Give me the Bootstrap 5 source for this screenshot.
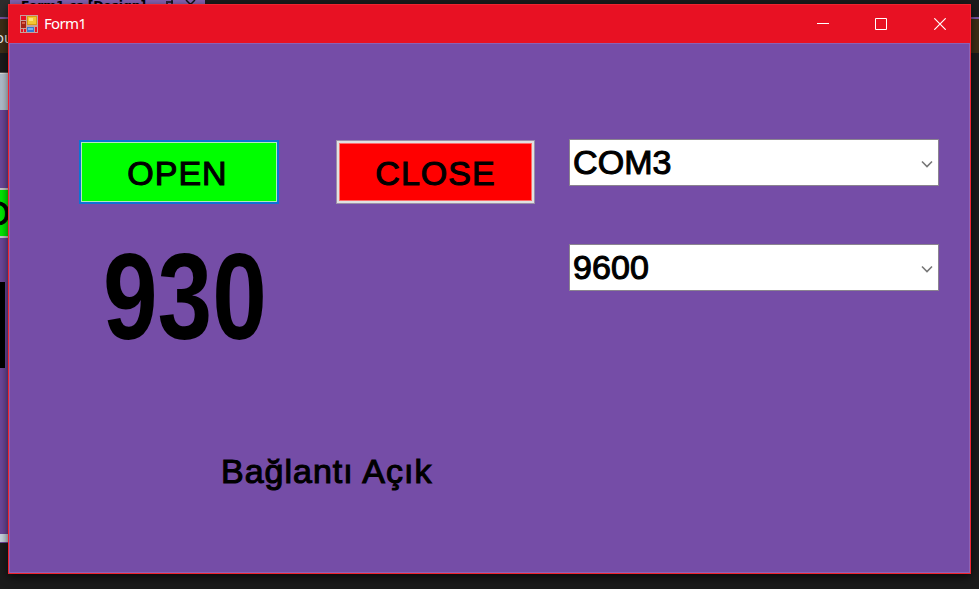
<!DOCTYPE html>
<html lang="tr">
<head>
<meta charset="utf-8">
<meta name="viewport" content="width=device-width, initial-scale=1">
<title>Form1</title>
<link href="https://cdn.jsdelivr.net/npm/bootstrap@5.3.0/dist/css/bootstrap.min.css" rel="stylesheet">
<style>
body{background:#1b1b1b;font-family:"Liberation Sans",Arial,sans-serif;color:#000}
.desktop{width:979px;height:589px}
/* editor behind the form */
.ide-tabs{height:17px;background:linear-gradient(90deg,#2d2d2d 12px,#1b1b1b 12px)}
.ide-tab{margin-left:10px;width:195px;height:17px;background:#8463b0;font:bold 12.5px/11px "DejaVu Sans",sans-serif;padding-left:11px;white-space:nowrap}
.ide-tab .tab-name{width:140px;letter-spacing:-.2px}
.ide-tab svg{margin-top:-1px}
.ide-bar{height:36px;background:#3e2e16;border-top:2px solid #7656a3;color:#eee;font:15px/36px "Open Sans",sans-serif}
.ide-bar span{margin-left:-5px}
.ide-gap{height:20px;width:10px;border-bottom:1px solid #555}
.design{width:10px;height:470px;background:#6c4799}
.design-title{height:37px;background:linear-gradient(90deg,#aebccb,#cbd6df);border-top:1px solid #ddd}
.design-btn{height:50px;margin-top:78px;border-top:2px solid #c8c8c8;border-bottom:2px solid #c8c8c8;background:#00ea00;font-size:34px;line-height:47px;-webkit-text-stroke:1px}
.design-btn span{margin-left:-16px}
.design-num{width:5px;height:86px;margin-top:44px;background:#000}
.design-foot{height:8px;margin-top:166px;background:#c8d4df}
/* form window */
.win{left:8px;top:4px;width:963px;height:570px;border:1px solid #f0252f;background:#754da7;box-shadow:0 3px 9px #000a}
.titlebar{height:38px;background:#e81123;color:#fff;padding:0 1px 0 11px}
.caption{font:15px/36px "Noto Sans","Open Sans",sans-serif;margin:-2px 0 0 6px;letter-spacing:-.7px}
.ctl{width:58.5px;height:38px}
.client{height:530px;border:1px solid #8a62b5;padding:96px 31px 0 69px}
.left{width:456px}
.right{width:370px;gap:58px;margin:-1px -1px 0 0}
.txt{font-size:34px;line-height:38px;-webkit-text-stroke:1.1px #000;white-space:nowrap}
.fbtn{height:64px;border-radius:0;color:#000;padding:1px 0 0}
.open{width:200px;background:#0f0;border:2px solid #0d74d5;box-shadow:inset 0 0 0 1px #b5e8c0;padding-right:3px}
.close-b{width:199px;background:#f00;border:1px solid #9b90a8;box-shadow:inset 0 0 0 2px #e1e1e1,inset 0 0 0 3px #ff6b6b}
.open,.close-b{letter-spacing:1px}
.combo{height:47px;background:#fff;border:1px solid #8b8490;padding:0 5px 0 3px;letter-spacing:.1px}
.combo span{margin-top:-2px}
.combo svg{margin-top:2px}
.big{font-size:122px;font-weight:700;line-height:120px;margin:33px 0 0 24px;transform:scaleX(.805);transform-origin:0 0}
.status{margin:95px 0 0 142px;letter-spacing:1px}
</style>
<script src="https://cdn.jsdelivr.net/npm/bootstrap@5.3.0/dist/js/bootstrap.bundle.min.js"></script>
</head>
<body class="m-0 overflow-hidden">
<div class="desktop position-relative overflow-hidden">
  <div class="ide-tabs overflow-hidden"><div class="ide-tab d-flex"><span class="tab-name">Form1.cs [Design]</span><svg width="36" height="14"><path fill="none" stroke="#111" stroke-width="1.5" d="M5 3h7M11 1v8M6 4v4h5M25 1l9 9M34 1l-9 9"/></svg></div></div>
  <div class="ide-bar"><span>ou</span></div>
  <div class="ide-gap"></div>
  <div class="design overflow-hidden d-flex flex-column">
    <div class="design-title flex-shrink-0"></div>
    <div class="design-btn flex-shrink-0 text-nowrap"><span>O</span></div>
    <div class="design-num flex-shrink-0"></div>
    <div class="design-foot flex-shrink-0"></div>
  </div>

  <main class="win position-absolute">
    <header class="titlebar d-flex align-items-center">
      <svg width="18" height="18" viewBox="0 0 18 18">
        <path fill="#c9a09c" d="M0 0h18v18H0z"/>
        <path fill="#e81123" d="M1 1h5v4H1zM1 14h2v3H1zM4 14h2v3H4zM15 12h2v5h-2z"/>
        <path fill="#a52216" d="M1 6h5v7H1z"/><path fill="#d9604a" d="M2 7h3v2H2z"/>
        <path fill="#d99b12" d="M7 1h10v9H7z"/><path fill="#f3c532" d="M8 2h8v7H8z"/><path fill="#fbe27a" d="M9 3h4v3H9z"/>
        <path fill="#3478d2" d="M7 12h7v5H7z"/><path fill="#77aeec" d="M8 13h5v2H8z"/>
      </svg>
      <span class="caption me-auto">Form1</span>
      <span class="ctl d-flex align-items-center justify-content-center"><svg width="12" height="12"><path stroke="#fff" d="M0 5.5h12"/></svg></span>
      <span class="ctl d-flex align-items-center justify-content-center"><svg width="12" height="12"><path fill="none" stroke="#fff" d="M.5 .5h11v11H.5z"/></svg></span>
      <span class="ctl d-flex align-items-center justify-content-center"><svg width="12" height="12"><path stroke="#fff" stroke-width="1.2" d="M.3.3l11.4 11.4M11.7.3L.3 11.7"/></svg></span>
    </header>
    <section class="client d-flex justify-content-between">
      <div class="left">
        <div class="d-flex justify-content-between">
          <button type="button" class="btn fbtn open txt">OPEN</button>
          <button type="button" class="btn fbtn close-b txt">CLOSE</button>
        </div>
        <div class="big">930</div>
        <div class="status txt">Bağlantı Açık</div>
      </div>
      <div class="right d-flex flex-column">
        <div class="combo txt d-flex align-items-center justify-content-between"><span>COM3</span><svg width="12" height="8"><path fill="none" stroke="#777" stroke-width="1.6" d="M1 1.5l5 5 5-5"/></svg></div>
        <div class="combo txt d-flex align-items-center justify-content-between"><span>9600</span><svg width="12" height="8"><path fill="none" stroke="#777" stroke-width="1.6" d="M1 1.5l5 5 5-5"/></svg></div>
      </div>
    </section>
  </main>
</div>
</body>
</html>
